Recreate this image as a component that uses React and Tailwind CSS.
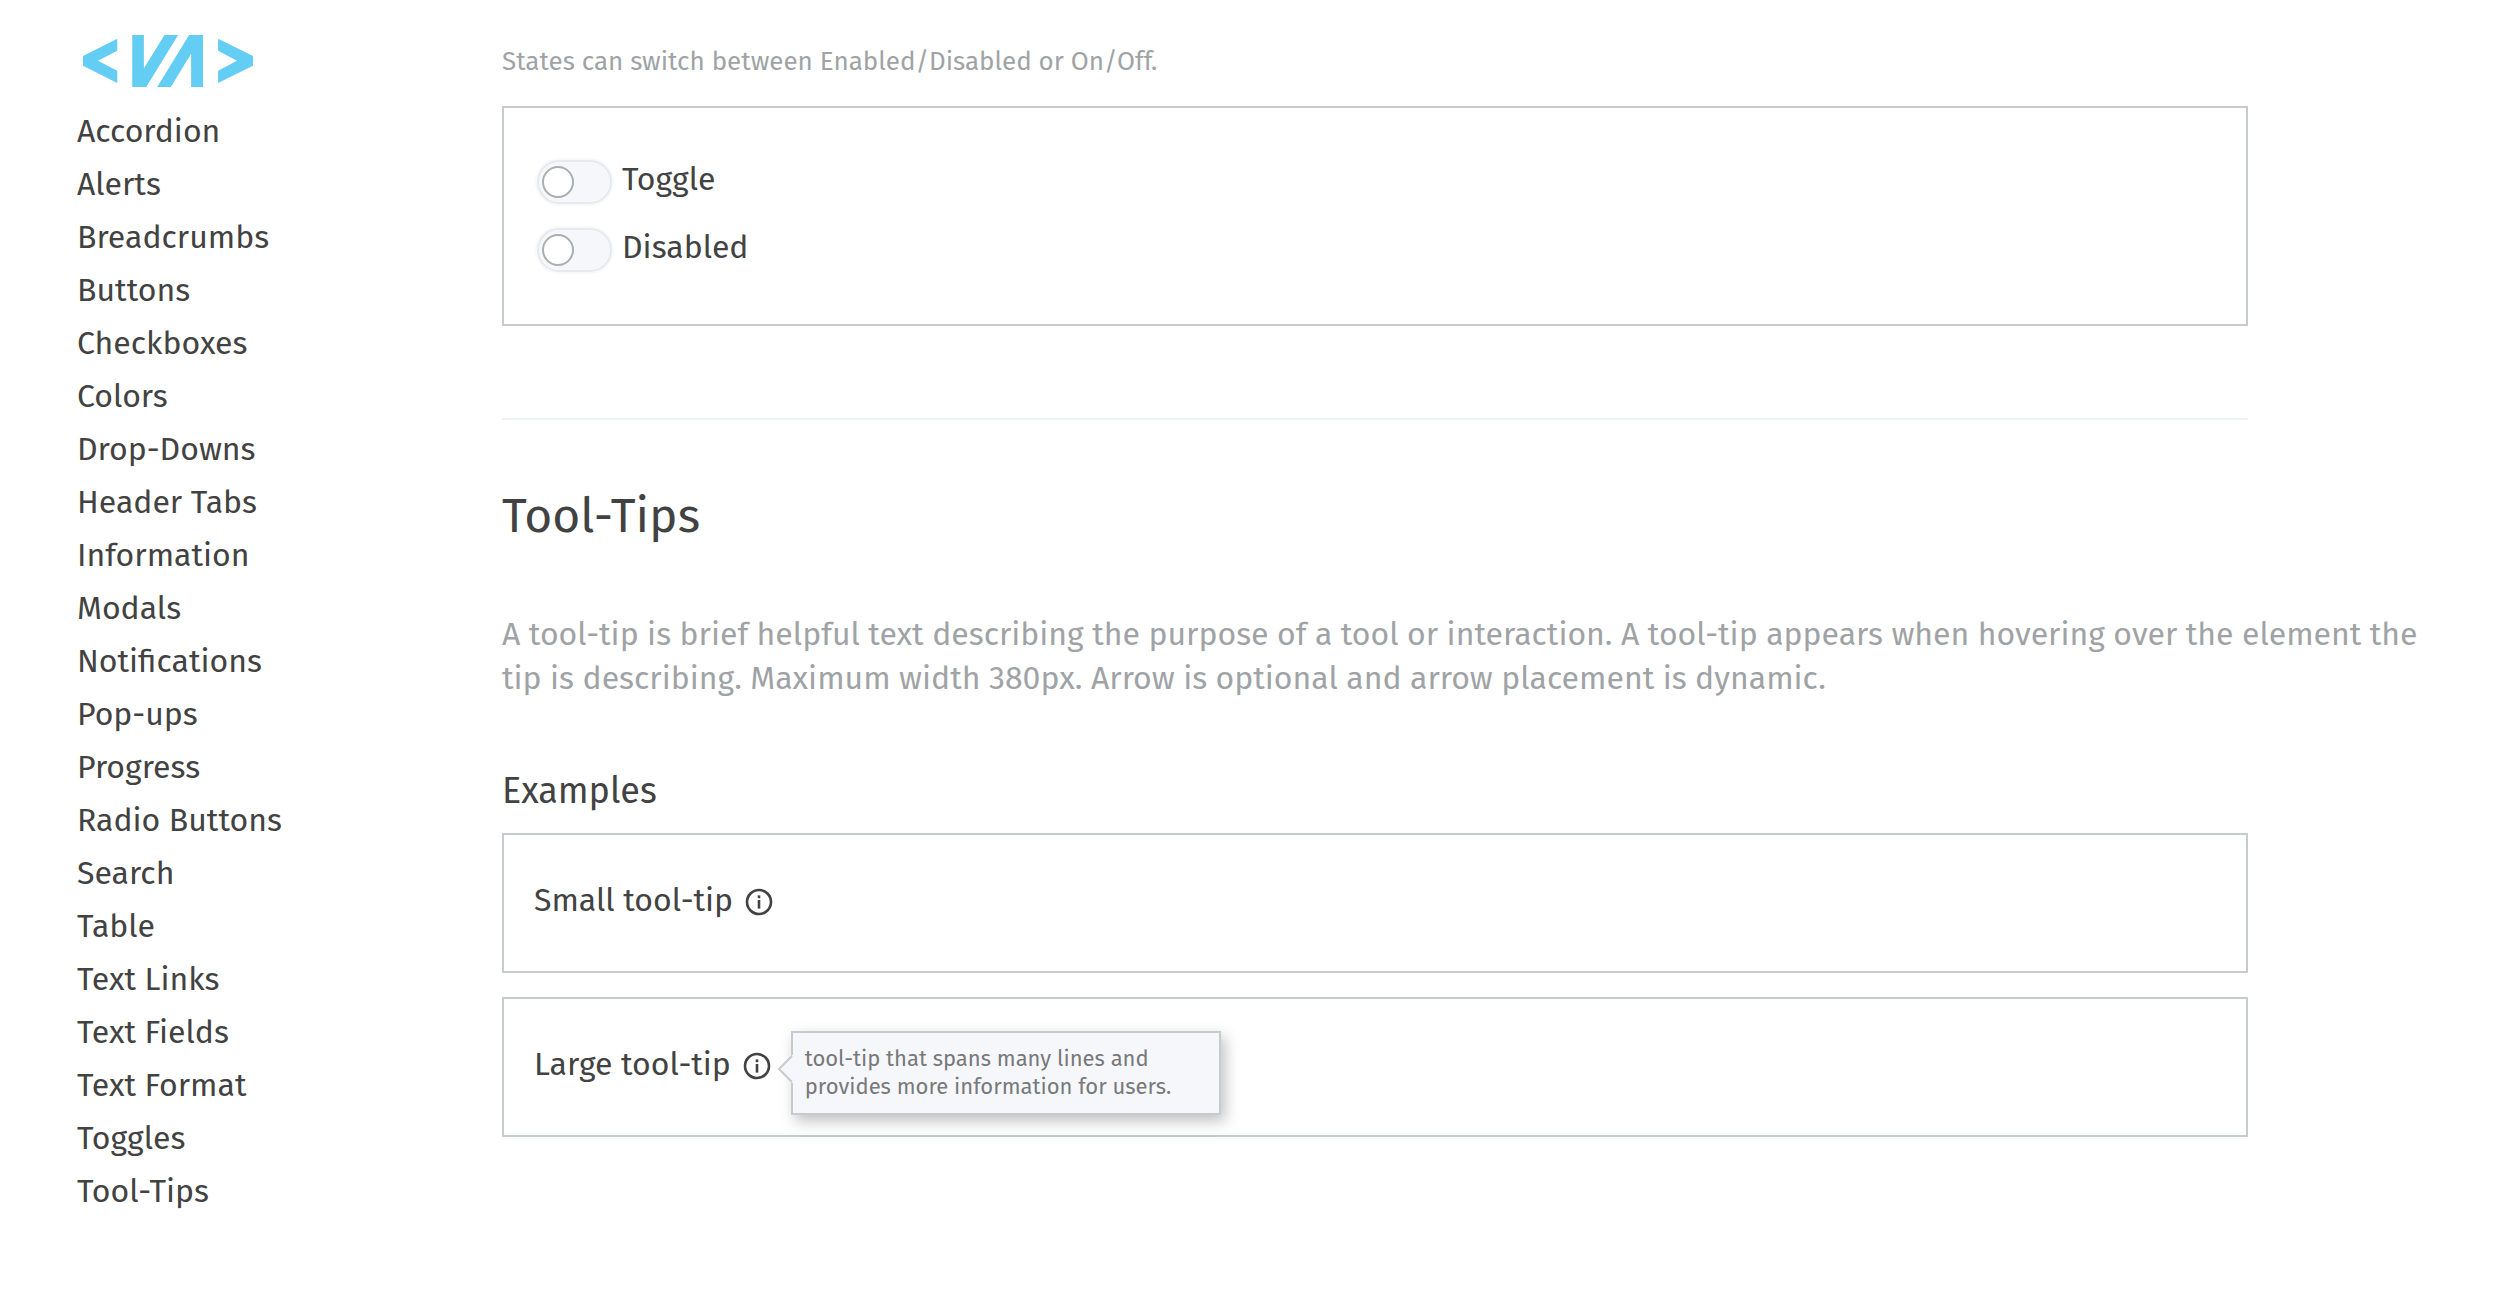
import React from "react";

const navItems = [
  "Accordion", "Alerts", "Breadcrumbs", "Buttons", "Checkboxes", "Colors", "Drop-Downs",
  "Header Tabs", "Information", "Modals", "Notifications", "Pop-ups", "Progress",
  "Radio Buttons", "Search", "Table", "Text Links", "Text Fields", "Text Format",
  "Toggles", "Tool-Tips",
];

function Logo() {
  return (
    <svg viewBox="68 45 511 156" className="h-[52px] w-[170px]" fill="#64cdf4" role="img" aria-label="VA">
      <path d="M171 56V92L113 122L171 152V189L68 137V108Z" />
      <path d="M474 56V92L531 122L474 152V189L579 137V108Z" />
      <path d="M216 45H251V145L313 45H354L258 201H216Z" />
      <path d="M291 201L387 45H429V201H393V101L332 201Z" />
    </svg>
  );
}

function InfoIcon() {
  return (
    <svg viewBox="0 0 28 28" className="h-7 w-7" fill="none" aria-hidden="true">
      <circle cx="14" cy="14" r="12" stroke="#424242" strokeWidth="2.6" />
      <rect x="12.7" y="7.4" width="2.6" height="2.8" fill="#424242" />
      <rect x="12.7" y="12" width="2.6" height="8.6" fill="#424242" />
    </svg>
  );
}

function Toggle({ id, label, disabled }) {
  return (
    <div className="flex h-11 items-center gap-2.5">
      <span className="relative block h-11 w-[75px]">
        <input
          id={id}
          type="checkbox"
          role="switch"
          disabled={disabled}
          className="peer h-11 w-[75px] appearance-none rounded-full border-2 border-[#e6eaed] bg-[#f6f7fa] shadow-[0_0_0_2px_#f7f9fa]"
        />
        <span className="pointer-events-none absolute left-[5px] top-1.5 h-8 w-8 rounded-full border-2 border-[#aaaeb1] bg-white transition-transform peer-checked:translate-x-8" />
      </span>
      <label htmlFor={id} className="pb-1.5 text-[32px] leading-10">{label}</label>
    </div>
  );
}

function TipCard({ label, children }) {
  return (
    <div className="flex h-[140px] w-[90%] items-start border-2 border-[#c6cbce] px-[30px] pt-[43px]">
      <span className="text-[32px] leading-[44px]">{label}</span>
      <span className="relative ml-3 flex h-12 items-center">
        <button type="button" aria-label={label + " information"}>
          <InfoIcon />
        </button>
        {children}
      </span>
    </div>
  );
}

export default function App() {
  return (
    <div className="flex min-h-screen bg-white font-['Fira_Sans','Noto_Sans',sans-serif] text-[#424242]">
      <nav className="w-[502px] shrink-0 pl-[77px] pt-[35px]">
        <a href="#top" className="ml-1.5 block w-[170px]">
          <Logo />
        </a>
        <ul className="mt-[17px]">
          {navItems.map((item) => (
            <li key={item} className="flex h-[53px] items-center">
              <a href={"#" + item} className="text-[32px] leading-10">{item}</a>
            </li>
          ))}
        </ul>
      </nav>
      <main className="min-w-0 flex-1 pr-[62px] pt-[42px]">
        <p className="text-[26px] leading-10 text-[#9fa3a6]">
          States can switch between Enabled/Disabled or On/Off.
        </p>
        <div className="mt-6 flex h-[220px] w-[90%] flex-col gap-6 border-2 border-[#c6cbce] px-[33px] pt-[52px]">
          <Toggle id="toggle" label="Toggle" />
          <Toggle id="toggle-disabled" label="Disabled" disabled />
        </div>
        <hr className="mt-[92px] w-[90%] border-t-2 border-[#eff2f5]" />
        <h1 className="mt-16 text-[48px] leading-[64px]">Tool-Tips</h1>
        <p className="mt-16 text-[32px] leading-[44px] text-[#9fa3a6]">
          A tool-tip is brief helpful text describing the purpose of a tool or interaction. A tool-tip
          appears when hovering over the element the tip is describing. Maximum width 380px. Arrow is
          optional and arrow placement is dynamic.
        </p>
        <h2 className="mt-[67px] text-[36px] leading-[48px]">Examples</h2>
        <div className="mt-[18px] flex flex-col gap-6">
          <TipCard label="Small tool-tip" />
          <TipCard label="Large tool-tip">
            <span
              role="tooltip"
              className="absolute left-12 top-[-11px] w-[430px] border-2 border-[#c6cbce] bg-[#f6f7fa] px-3 py-3 text-[22px] leading-7 text-[#77797b] shadow-[4px_6px_14px_rgba(0,0,0,0.25)]"
            >
              <svg viewBox="0 0 17 28" className="absolute -left-4 top-[22px] h-7 w-[17px]" aria-hidden="true">
                <path d="M17 0H15L2 14L15 28H17Z" fill="#f6f7fa" />
                <path d="M15 1L2 14L15 27" fill="none" stroke="#c6cbce" strokeWidth="2" />
              </svg>
              tool-tip that spans many lines and provides more information for users.
            </span>
          </TipCard>
        </div>
      </main>
    </div>
  );
}
